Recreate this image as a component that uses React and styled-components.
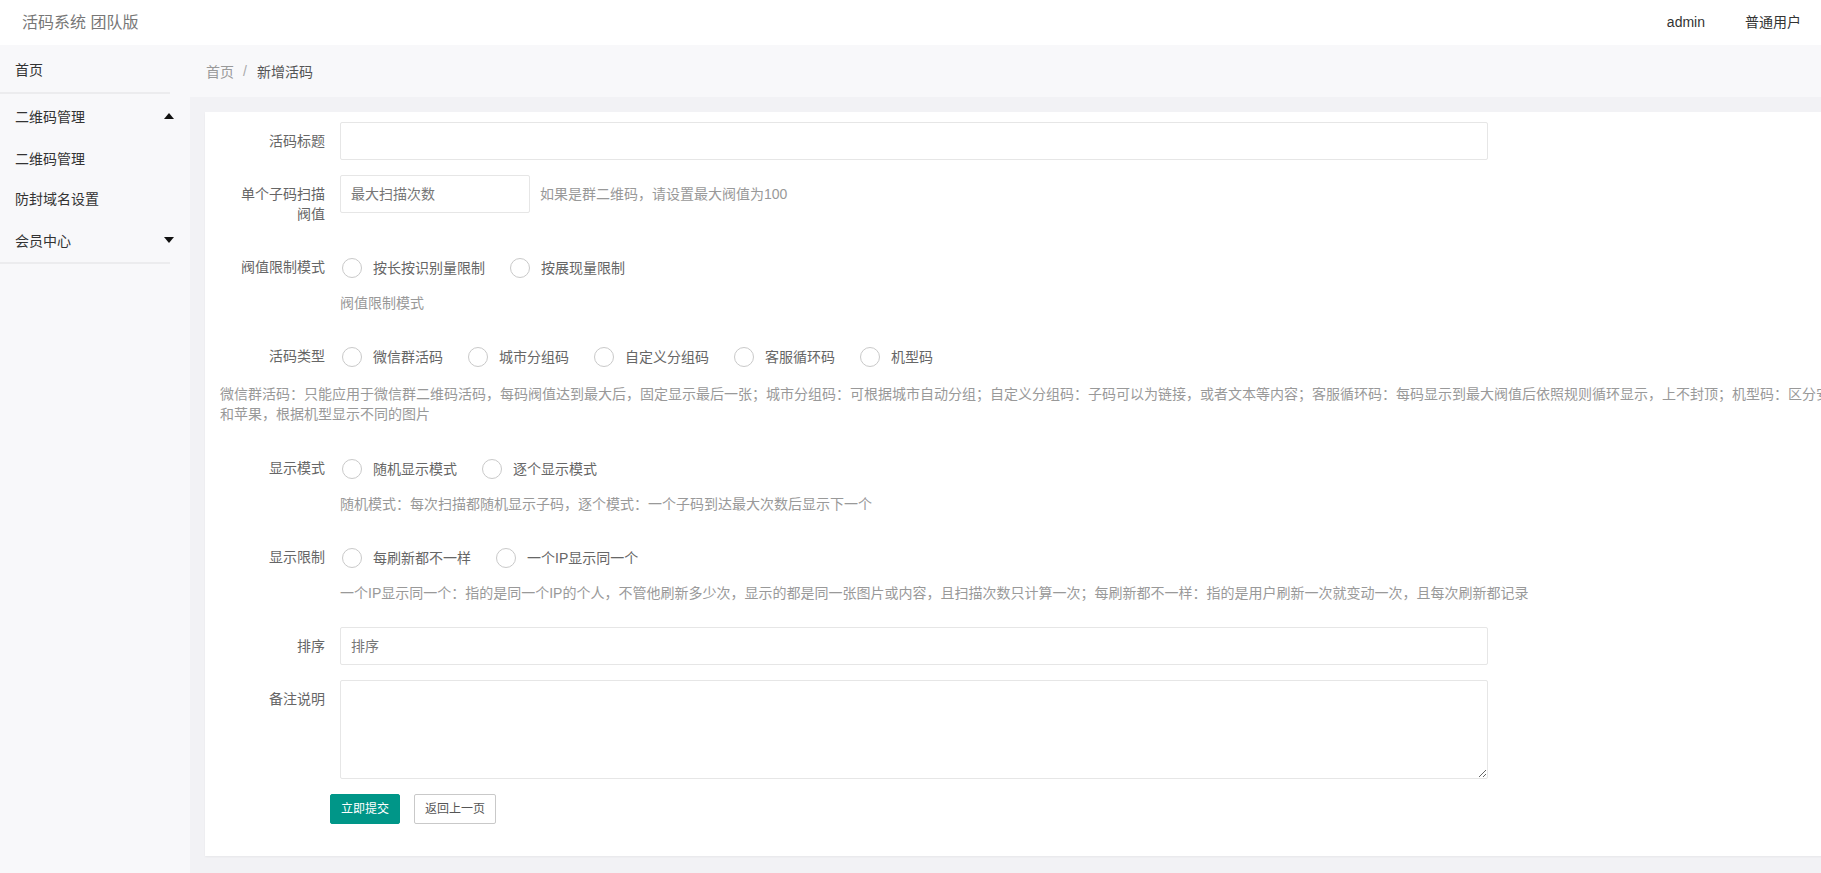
import React from "react";
import styled, { createGlobalStyle } from "styled-components";

const GlobalStyle = createGlobalStyle`
  html, body { margin: 0; padding: 0; overflow: hidden; }
  body {
    font-family: "Liberation Sans", "Noto Sans CJK SC", sans-serif;
    font-size: 14px;
    color: #333;
    background: #f2f2f5;
  }
  * { box-sizing: border-box; }
`;

const Page = styled.div`
  display: grid;
  grid-template-rows: 45px 1fr;
  grid-template-columns: minmax(0, 1fr);
  height: 100vh;
  width: 100vw;
  overflow: hidden;
`;

const Header = styled.header`
  display: flex;
  align-items: center;
  justify-content: space-between;
  background: #fff;
  padding-left: 22px;
  min-width: 0;
`;

const Brand = styled.div`
  font-size: 16px;
  color: #777;
  line-height: 20px;
`;

const Nav = styled.nav`
  display: flex;
  align-items: center;
`;

const NavItem = styled.span`
  padding: 0 20px;
  line-height: 45px;
  color: #333;
  font-size: 14px;
`;

const Body = styled.div`
  display: flex;
  min-height: 0;
  min-width: 0;
  overflow: hidden;
`;

const Sidebar = styled.aside`
  width: 190px;
  flex-shrink: 0;
  background: #f8f8fa;
`;

const MenuRow = styled.div`
  display: flex;
  align-items: center;
  justify-content: space-between;
  height: ${(p) => p.$h || 42}px;
  padding: 0 16px 0 15px;
  font-size: 14px;
  color: #333;
`;

const Divider = styled.div`
  width: 170px;
  height: 2px;
  background: #ececee;
`;

const Caret = styled.span`
  width: 0;
  height: 0;
  border-left: 5px solid transparent;
  border-right: 5px solid transparent;
  ${(p) =>
    p.$up
      ? "border-bottom: 6px solid #111;"
      : "border-top: 6px solid #111;"}
`;

const Main = styled.main`
  flex: 1;
  min-width: 0;
  display: flex;
  flex-direction: column;
  overflow: hidden;
`;

const Breadcrumb = styled.div`
  height: 52px;
  flex-shrink: 0;
  display: flex;
  align-items: center;
  padding-left: 16px;
  background: #f8f8fa;
  font-size: 14px;
`;

const Crumb = styled.span`
  color: ${(p) => (p.$current ? "#555" : "#999")};
`;

const Sep = styled.span`
  color: #aaa;
  margin: 0 10px 0 9px;
`;

const Content = styled.div`
  flex: 1;
  padding: 15px 0 17px 15px;
  background: #f2f2f5;
`;

const Card = styled.section`
  width: 1662px;
  background: #fff;
  padding: 10px 15px 17px;
  box-shadow: 0 1px 2px rgba(0, 0, 0, 0.05);
`;

const FormItem = styled.div`
  display: flex;
  align-items: flex-start;
  margin-bottom: ${(p) => (p.$mb !== undefined ? p.$mb : 15)}px;
`;

const Label = styled.label`
  width: 120px;
  flex-shrink: 0;
  padding: 9px 15px;
  line-height: 20px;
  text-align: right;
  color: #666;
  font-size: 14px;
`;

const Block = styled.div`
  flex: 1;
  min-width: 0;
`;

const InlineRow = styled.div`
  display: flex;
  align-items: flex-start;
`;

const Input = styled.input`
  display: block;
  width: ${(p) => p.$w || 1148}px;
  height: 38px;
  border: 1px solid #e6e6e6;
  border-radius: 2px;
  padding: 0 10px;
  font: inherit;
  font-size: 14px;
  color: #333;
  background: #fff;
  outline: none;
  &::placeholder { color: #777; }
`;

const TextArea = styled.textarea`
  display: block;
  width: 1148px;
  height: 99px;
  border: 1px solid #e6e6e6;
  border-radius: 2px;
  padding: 6px 10px;
  font: inherit;
  font-size: 14px;
  background: #fff;
  outline: none;
`;

const Hint = styled.div`
  padding: 9px 0;
  line-height: 20px;
  color: #999;
  font-size: 14px;
  margin-left: ${(p) => p.$ml || 0}px;
  margin-top: ${(p) => p.$mt || 0}px;
`;

const LongText = styled.div`
  padding: 9px 0;
  line-height: 20px;
  color: #999;
  font-size: 14px;
  margin-bottom: 16px;
`;

const RadioGroup = styled.div`
  display: flex;
  align-items: center;
  height: 28px;
  margin-top: 6px;
`;

const RadioItem = styled.span`
  display: inline-flex;
  align-items: center;
  margin-right: 23px;
  color: #666;
  font-size: 14px;
  line-height: 28px;
`;

const RadioCircle = styled.span`
  width: 20px;
  height: 20px;
  margin-left: 2px;
  margin-right: 11px;
  border: 1.5px solid #c9c9c9;
  border-radius: 50%;
  background: #fff;
`;

const ButtonRow = styled.div`
  display: flex;
  align-items: center;
  margin-left: 110px;
  margin-bottom: 15px;
  gap: 14px;
`;

const Button = styled.button`
  height: 30px;
  padding: 0 10px;
  font: inherit;
  font-size: 12px;
  line-height: 28px;
  border-radius: 2px;
  cursor: pointer;
  border: 1px solid ${(p) => (p.$primary ? "#009688" : "#c9c9c9")};
  background: ${(p) => (p.$primary ? "#009688" : "#fff")};
  color: ${(p) => (p.$primary ? "#fff" : "#555")};
`;

const Radio = ({ children }) => (
  <RadioItem>
    <RadioCircle />
    {children}
  </RadioItem>
);

const Radios = ({ items }) => (
  <RadioGroup>
    {items.map((t) => (
      <Radio key={t}>{t}</Radio>
    ))}
  </RadioGroup>
);

export default function App() {
  return (
    <>
      <GlobalStyle />
      <Page>
        <Header>
          <Brand>活码系统 团队版</Brand>
          <Nav>
            <NavItem>admin</NavItem>
            <NavItem>普通用户</NavItem>
          </Nav>
        </Header>
        <Body>
          <Sidebar>
            <MenuRow $h={47}>首页</MenuRow>
            <Divider />
            <MenuRow $h={43}>
              二维码管理
              <Caret $up />
            </MenuRow>
            <MenuRow $h={41}>二维码管理</MenuRow>
            <MenuRow $h={40}>防封域名设置</MenuRow>
            <MenuRow $h={44}>
              会员中心
              <Caret />
            </MenuRow>
            <Divider />
          </Sidebar>
          <Main>
            <Breadcrumb>
              <Crumb>首页</Crumb>
              <Sep>/</Sep>
              <Crumb $current>新增活码</Crumb>
            </Breadcrumb>
            <Content>
              <Card>
                <FormItem>
                  <Label>活码标题</Label>
                  <Block>
                    <Input />
                  </Block>
                </FormItem>
                <FormItem>
                  <Label>单个子码扫描阀值</Label>
                  <Block>
                    <InlineRow>
                      <Input $w={190} placeholder="最大扫描次数" />
                      <Hint $ml={10}>如果是群二维码，请设置最大阀值为100</Hint>
                    </InlineRow>
                  </Block>
                </FormItem>
                <FormItem>
                  <Label>阀值限制模式</Label>
                  <Block>
                    <Radios items={["按长按识别量限制", "按展现量限制"]} />
                    <Hint $mt={2}>阀值限制模式</Hint>
                  </Block>
                </FormItem>
                <FormItem $mb={0}>
                  <Label>活码类型</Label>
                  <Block>
                    <Radios
                      items={["微信群活码", "城市分组码", "自定义分组码", "客服循环码", "机型码"]}
                    />
                  </Block>
                </FormItem>
                <LongText>
                  微信群活码：只能应用于微信群二维码活码，每码阀值达到最大后，固定显示最后一张；城市分组码：可根据城市自动分组；自定义分组码：子码可以为链接，或者文本等内容；客服循环码：每码显示到最大阀值后依照规则循环显示，上不封顶；机型码：区分安卓和苹果，根据机型显示不同的图片
                </LongText>
                <FormItem>
                  <Label>显示模式</Label>
                  <Block>
                    <Radios items={["随机显示模式", "逐个显示模式"]} />
                    <Hint $mt={2}>
                      随机模式：每次扫描都随机显示子码，逐个模式：一个子码到达最大次数后显示下一个
                    </Hint>
                  </Block>
                </FormItem>
                <FormItem>
                  <Label>显示限制</Label>
                  <Block>
                    <Radios items={["每刷新都不一样", "一个IP显示同一个"]} />
                    <Hint $mt={2}>
                      一个IP显示同一个：指的是同一个IP的个人，不管他刷新多少次，显示的都是同一张图片或内容，且扫描次数只计算一次；每刷新都不一样：指的是用户刷新一次就变动一次，且每次刷新都记录
                    </Hint>
                  </Block>
                </FormItem>
                <FormItem>
                  <Label>排序</Label>
                  <Block>
                    <Input placeholder="排序" />
                  </Block>
                </FormItem>
                <FormItem>
                  <Label>备注说明</Label>
                  <Block>
                    <TextArea />
                  </Block>
                </FormItem>
                <ButtonRow>
                  <Button $primary>立即提交</Button>
                  <Button>返回上一页</Button>
                </ButtonRow>
              </Card>
            </Content>
          </Main>
        </Body>
      </Page>
    </>
  );
}
